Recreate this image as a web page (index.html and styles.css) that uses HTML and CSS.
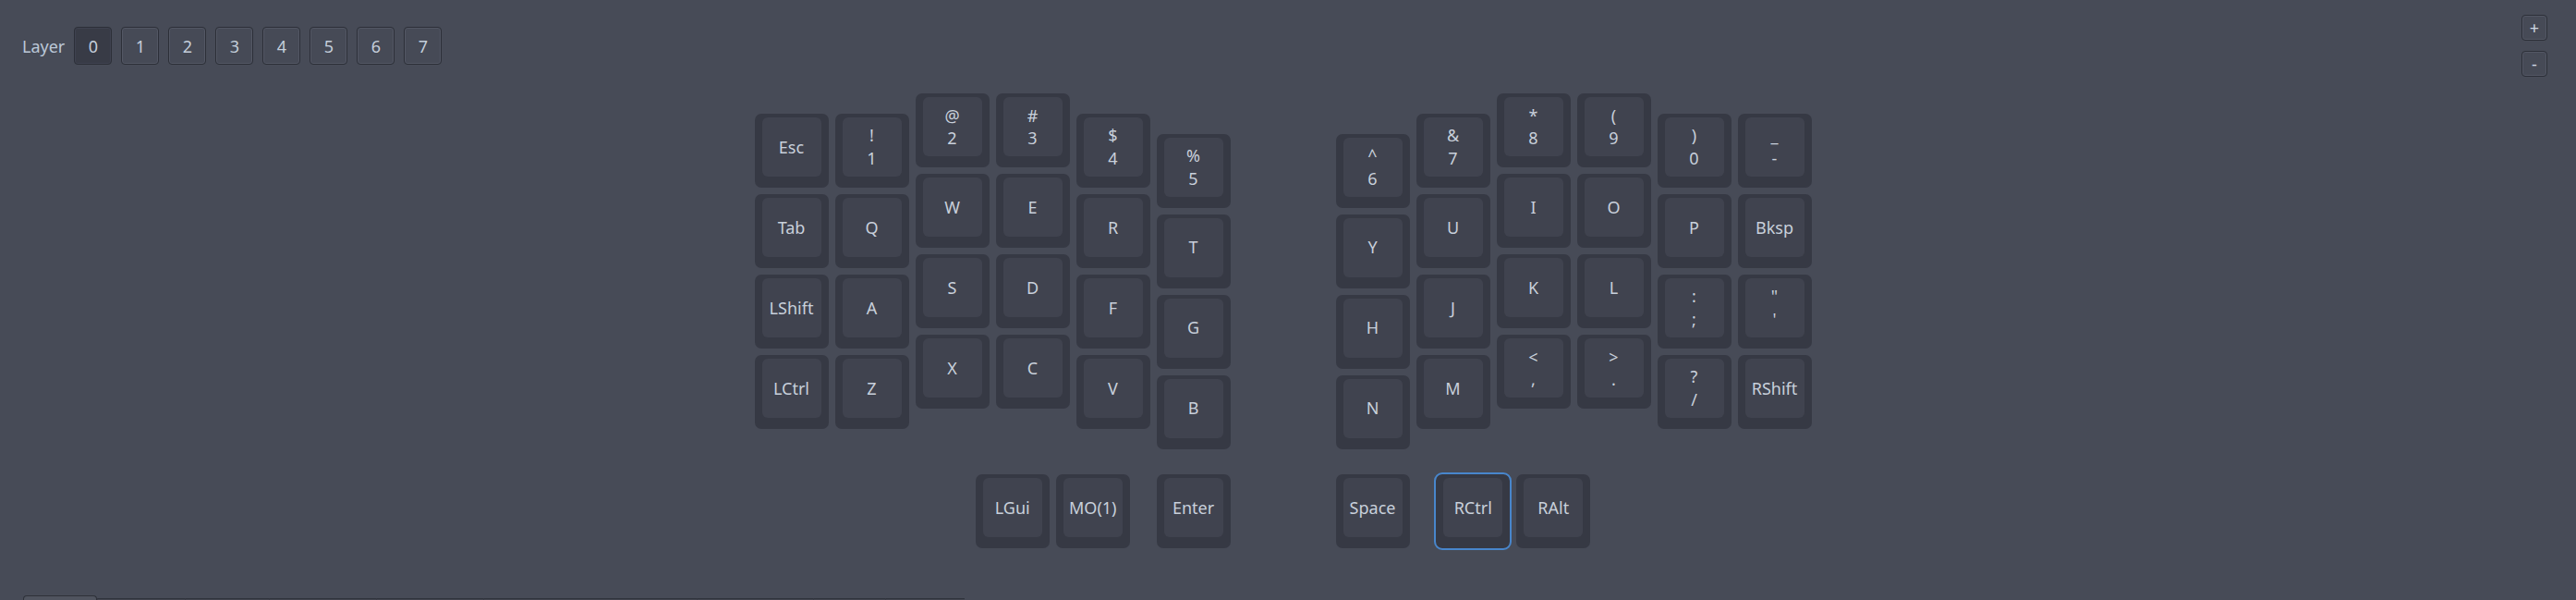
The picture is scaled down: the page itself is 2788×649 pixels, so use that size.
FILE: index.html
```html
<!DOCTYPE html>
<html>
<head>
<meta charset="utf-8">
<title>Keymap</title>
<link rel="stylesheet" href="styles.css">
</head>
<body>
<div class="app">
  <div class="header">
    <div class="layers">
      <span class="layer-label">Layer</span>
      <div class="lbtn active">0</div>
      <div class="lbtn">1</div>
      <div class="lbtn">2</div>
      <div class="lbtn">3</div>
      <div class="lbtn">4</div>
      <div class="lbtn">5</div>
      <div class="lbtn">6</div>
      <div class="lbtn">7</div>
    </div>
    <div class="zoom">
      <div class="zbtn">+</div>
      <div class="zbtn">-</div>
    </div>
  </div>

  <div class="keyboard">
    <div class="halves">
      <div class="half">
        <div class="col o1">
          <div class="key"><div class="cap">Esc</div></div>
          <div class="key"><div class="cap">Tab</div></div>
          <div class="key"><div class="cap">LShift</div></div>
          <div class="key"><div class="cap">LCtrl</div></div>
        </div>
        <div class="col o1">
          <div class="key"><div class="cap"><span>!<br>1</span></div></div>
          <div class="key"><div class="cap">Q</div></div>
          <div class="key"><div class="cap">A</div></div>
          <div class="key"><div class="cap">Z</div></div>
        </div>
        <div class="col">
          <div class="key"><div class="cap"><span>@<br>2</span></div></div>
          <div class="key"><div class="cap">W</div></div>
          <div class="key"><div class="cap">S</div></div>
          <div class="key"><div class="cap">X</div></div>
        </div>
        <div class="col">
          <div class="key"><div class="cap"><span>#<br>3</span></div></div>
          <div class="key"><div class="cap">E</div></div>
          <div class="key"><div class="cap">D</div></div>
          <div class="key"><div class="cap">C</div></div>
        </div>
        <div class="col o1">
          <div class="key"><div class="cap"><span>$<br>4</span></div></div>
          <div class="key"><div class="cap">R</div></div>
          <div class="key"><div class="cap">F</div></div>
          <div class="key"><div class="cap">V</div></div>
        </div>
        <div class="col o2">
          <div class="key"><div class="cap"><span>%<br>5</span></div></div>
          <div class="key"><div class="cap">T</div></div>
          <div class="key"><div class="cap">G</div></div>
          <div class="key"><div class="cap">B</div></div>
        </div>
      </div>

      <div class="half">
        <div class="col o2">
          <div class="key"><div class="cap"><span>^<br>6</span></div></div>
          <div class="key"><div class="cap">Y</div></div>
          <div class="key"><div class="cap">H</div></div>
          <div class="key"><div class="cap">N</div></div>
        </div>
        <div class="col o1">
          <div class="key"><div class="cap"><span>&amp;<br>7</span></div></div>
          <div class="key"><div class="cap">U</div></div>
          <div class="key"><div class="cap">J</div></div>
          <div class="key"><div class="cap">M</div></div>
        </div>
        <div class="col">
          <div class="key"><div class="cap"><span>*<br>8</span></div></div>
          <div class="key"><div class="cap">I</div></div>
          <div class="key"><div class="cap">K</div></div>
          <div class="key"><div class="cap"><span>&lt;<br>,</span></div></div>
        </div>
        <div class="col">
          <div class="key"><div class="cap"><span>(<br>9</span></div></div>
          <div class="key"><div class="cap">O</div></div>
          <div class="key"><div class="cap">L</div></div>
          <div class="key"><div class="cap"><span>&gt;<br>.</span></div></div>
        </div>
        <div class="col o1">
          <div class="key"><div class="cap"><span>)<br>0</span></div></div>
          <div class="key"><div class="cap">P</div></div>
          <div class="key"><div class="cap"><span>:<br>;</span></div></div>
          <div class="key"><div class="cap"><span>?<br>/</span></div></div>
        </div>
        <div class="col o1">
          <div class="key"><div class="cap"><span>_<br>-</span></div></div>
          <div class="key"><div class="cap">Bksp</div></div>
          <div class="key"><div class="cap"><span>"<br>'</span></div></div>
          <div class="key"><div class="cap">RShift</div></div>
        </div>
      </div>
    </div>

    <div class="thumbs">
      <div class="key t-lgui"><div class="cap">LGui</div></div>
      <div class="key t-mo"><div class="cap">MO(1)</div></div>
      <div class="key t-enter"><div class="cap">Enter</div></div>
      <div class="key t-space"><div class="cap">Space</div></div>
      <div class="key t-rctrl focused"><div class="cap">RCtrl</div></div>
      <div class="key t-ralt"><div class="cap">RAlt</div></div>
    </div>
  </div>

  <div class="tabbar">
    <div class="tab active"></div>
    <div class="tab w95"></div>
    <div class="tab w91"></div>
    <div class="tab w116"></div>
    <div class="tab w116"></div>
    <div class="tab w231"></div>
    <div class="tab w126"></div>
    <div class="tab w78"></div>
    <div class="tab w86"></div>
  </div>
</div>
</body>
</html>
```

FILE: styles.css
```css
html, body {
  margin: 0;
  padding: 0;
  background: #474b57;
}

body {
  font-family: "Noto Sans", "Open Sans", "DejaVu Sans", sans-serif;
  color: #c8d0db;
}

.app {
  width: 2788px;
  height: 649px;
  display: flex;
  flex-direction: column;
  overflow: hidden;
}

/* ---------- header ---------- */
.header {
  display: flex;
  justify-content: space-between;
  align-items: flex-start;
  height: 101px;
  box-sizing: border-box;
  padding: 0 31px 0 24px;
  flex: none;
}

.layers {
  display: flex;
  align-items: center;
  gap: 10px;
  margin-top: 29px;
  height: 41px;
}

.layer-label {
  font-size: 18px;
  color: #bcc8d8;
}

.lbtn {
  width: 41px;
  height: 41px;
  box-sizing: border-box;
  border: 1px solid #2c2f38;
  border-radius: 4px;
  background: #464a56;
  box-shadow: inset 0 0 0 1px #535764;
  display: flex;
  align-items: center;
  justify-content: center;
  font-size: 18px;
  color: #c4cedb;
}

.lbtn.active {
  background: #383b46;
  box-shadow: inset 0 0 0 1px #3f4250;
}

.zoom {
  display: flex;
  flex-direction: column;
  gap: 11px;
  margin-top: 16px;
}

.zbtn {
  width: 28px;
  height: 28px;
  box-sizing: border-box;
  border: 1px solid #2c2f38;
  border-radius: 4px;
  background: #464a56;
  box-shadow: inset 0 0 0 1px #535764;
  display: flex;
  align-items: center;
  justify-content: center;
  font-size: 18px;
  line-height: 1;
  color: #d0d8e3;
}

/* ---------- keyboard ---------- */
.keyboard {
  margin-left: 816.5px;
  flex: none;
}

.halves {
  display: flex;
  align-items: flex-start;
  gap: 114px;
}

.half {
  display: flex;
  align-items: flex-start;
  gap: 7px;
}

.col {
  display: flex;
  flex-direction: column;
  gap: 7px;
}

.col.o1 { margin-top: 21.75px; }
.col.o2 { margin-top: 43.5px; }

.key {
  width: 80px;
  height: 80px;
  box-sizing: border-box;
  padding: 4px 8px 12px 8px;
  background: #363944;
  border-radius: 7px;
  flex: none;
}

.cap {
  height: 100%;
  background: #40434f;
  border-radius: 6px;
  display: flex;
  align-items: center;
  justify-content: center;
  text-align: center;
  font-size: 18px;
  line-height: 1.36;
  color: #c8d0db;
  white-space: nowrap;
}

/* ---------- thumb cluster ---------- */
.thumbs {
  display: flex;
  align-items: flex-start;
  margin-top: 27.5px;
}

.t-lgui  { margin-left: 239.25px; }
.t-mo    { margin-left: 7px; }
.t-enter { margin-left: 28.75px; }
.t-space { margin-left: 114px; }
.t-rctrl { margin-left: 28.75px; }
.t-ralt  { margin-left: 7px; }

.key.focused {
  outline: 2px solid #4886cc;
  outline-offset: 0;
}

/* ---------- bottom tab bar ---------- */
.tabbar {
  margin-top: auto;
  height: 5px;
  display: flex;
  align-items: flex-end;
  padding-left: 25px;
  flex: none;
}

.tab {
  height: 2px;
  box-sizing: border-box;
  border-top: 1px solid #30333c;
  border-left: 1px solid #3a3d47;
  background: #41444f;
}

.tab.active {
  width: 80px;
  height: 5px;
  border: 1px solid #2e3139;
  border-bottom: none;
  border-radius: 4px 4px 0 0;
  background: #50545f;
}

.w95 { width: 95px; }
.w91 { width: 91px; }
.w116 { width: 116px; }
.w231 { width: 231px; }
.w126 { width: 126px; }
.w78 { width: 78px; }
.w86 { width: 86px; }
```
